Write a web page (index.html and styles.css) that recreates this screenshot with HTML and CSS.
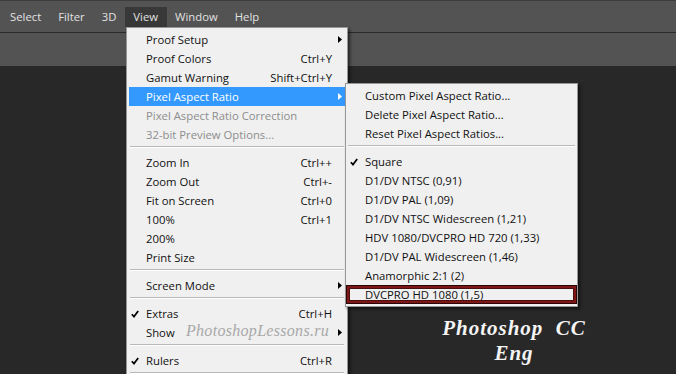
FILE: index.html
```html
<!DOCTYPE html>
<html lang="en">
<head>
    <meta charset="UTF-8">
    <meta name="viewport" content="width=device-width, initial-scale=1.0">
    <title>View - Pixel Aspect Ratio</title>
    <link rel="stylesheet" href="styles.css">
</head>
<body>
    <div class="menubar">
        <span class="menu-title">Select</span>
        <span class="menu-title">Filter</span>
        <span class="menu-title">3D</span>
        <span class="menu-title open">View</span>
        <span class="menu-title">Window</span>
        <span class="menu-title">Help</span>
    </div>
    <div class="options"></div>
    <div class="workspace"></div>

    <!-- View menu -->
    <div class="menu view-menu">
        <div class="row"><span></span><span>Proof Setup</span><span></span><span class="arrow"><svg width="4" height="7" viewBox="0 0 4 7"><path d="M0 0L4 3.5L0 7z"/></svg></span></div>
        <div class="row"><span></span><span>Proof Colors</span><span class="key">Ctrl+Y</span><span></span></div>
        <div class="row"><span></span><span>Gamut Warning</span><span class="key">Shift+Ctrl+Y</span><span></span></div>
        <div class="row active"><span></span><span>Pixel Aspect Ratio</span><span></span><span class="arrow"><svg width="4" height="7" viewBox="0 0 4 7"><path d="M0 0L4 3.5L0 7z"/></svg></span></div>
        <div class="row disabled"><span></span><span>Pixel Aspect Ratio Correction</span><span></span><span></span></div>
        <div class="row disabled"><span></span><span>32-bit Preview Options...</span><span></span><span></span></div>
        <div class="sep"></div>
        <div class="row"><span></span><span>Zoom In</span><span class="key">Ctrl++</span><span></span></div>
        <div class="row"><span></span><span>Zoom Out</span><span class="key">Ctrl+-</span><span></span></div>
        <div class="row"><span></span><span>Fit on Screen</span><span class="key">Ctrl+0</span><span></span></div>
        <div class="row"><span></span><span>100%</span><span class="key">Ctrl+1</span><span></span></div>
        <div class="row"><span></span><span>200%</span><span></span><span></span></div>
        <div class="row"><span></span><span>Print Size</span><span></span><span></span></div>
        <div class="sep"></div>
        <div class="row"><span></span><span>Screen Mode</span><span></span><span class="arrow"><svg width="4" height="7" viewBox="0 0 4 7"><path d="M0 0L4 3.5L0 7z"/></svg></span></div>
        <div class="sep"></div>
        <div class="row"><span class="check"><svg width="8" height="8" viewBox="0 0 8 8"><path d="M0.8 4.2L3 6.6L7.2 1"/></svg></span><span>Extras</span><span class="key">Ctrl+H</span><span></span></div>
        <div class="row"><span></span><span>Show</span><span></span><span class="arrow"><svg width="4" height="7" viewBox="0 0 4 7"><path d="M0 0L4 3.5L0 7z"/></svg></span></div>
        <div class="sep"></div>
        <div class="row"><span class="check"><svg width="8" height="8" viewBox="0 0 8 8"><path d="M0.8 4.2L3 6.6L7.2 1"/></svg></span><span>Rulers</span><span class="key">Ctrl+R</span><span></span></div>
        <div class="sep"></div>
    </div>

    <!-- Pixel Aspect Ratio submenu -->
    <div class="menu submenu">
        <div class="row"><span></span><span>Custom Pixel Aspect Ratio...</span></div>
        <div class="row"><span></span><span>Delete Pixel Aspect Ratio...</span></div>
        <div class="row"><span></span><span>Reset Pixel Aspect Ratios...</span></div>
        <div class="sep"></div>
        <div class="row"><span class="check"><svg width="8" height="8" viewBox="0 0 8 8"><path d="M0.8 4.2L3 6.6L7.2 1"/></svg></span><span>Square</span></div>
        <div class="row"><span></span><span>D1/DV NTSC (0,91)</span></div>
        <div class="row"><span></span><span>D1/DV PAL (1,09)</span></div>
        <div class="row"><span></span><span>D1/DV NTSC Widescreen (1,21)</span></div>
        <div class="row"><span></span><span>HDV 1080/DVCPRO HD 720 (1,33)</span></div>
        <div class="row"><span></span><span>D1/DV PAL Widescreen (1,46)</span></div>
        <div class="row"><span></span><span>Anamorphic 2:1 (2)</span></div>
        <div class="row marked"><span></span><span>DVCPRO HD 1080 (1,5)</span></div>
    </div>

    <div class="watermark site">PhotoshopLessons.ru</div>
    <div class="watermark brand">Photoshop&nbsp; CC<br>Eng</div>
</body>
</html>
```

FILE: styles.css
```css
body {
    margin: 0;
    height: 374px;
    overflow: hidden;
    position: relative;
    background-color: #282828;
    font-family: "Open Sans", "Noto Sans", sans-serif;
    font-size: 11.3px;
}
.menubar {
    display: flex;
    height: 31px;
    padding-left: 1.5px;
    background-color: #535353;
    border-top: 1px solid #3d3d3d;
    border-bottom: 1px solid #2a2a2a;
}
.menu-title {
    margin-top: 6px;
    height: 20px;
    line-height: 20px;
    padding: 0 8.5px;
    color: #e2e2e2;
}
.menu-title.open {
    background-color: #383838;
    height: 20px;
}
.options {
    height: 33px;
    background-color: #535353;
}
.workspace {
    height: 308px;
    background-color: #282828;
}
.menu {
    position: absolute;
    box-sizing: border-box;
    background-color: #f0f0f0;
    border: 1px solid #979797;
    box-shadow: 2px 2px 3px rgba(0, 0, 0, 0.55);
    color: #111;
}
.view-menu {
    left: 126px;
    top: 27px;
    width: 222px;
    padding: 2px 2px;
}
.submenu {
    left: 345px;
    top: 83px;
    width: 233px;
    padding: 2px 0;
}
.row {
    display: grid;
    grid-template-columns: 17px 1fr auto 13px;
    align-items: center;
    height: 19px;
    white-space: nowrap;
}
.submenu .row {
    grid-template-columns: 19px 1fr;
}
.row.active {
    background-color: #3399ff;
    color: #fff;
}
.row.disabled {
    color: #8d8d8d;
}
.row.marked {
    box-shadow: inset 0 0 0 1px #2a0505, inset 0 0 0 3px #7e1616, inset 0 0 0 4px #4a1010;
}
.key {
    text-align: right;
}
.arrow {
    display: flex;
    padding-left: 6px;
}
.arrow path {
    fill: #000;
}
.active .arrow path {
    fill: #fff;
}
.check {
    display: flex;
    margin-left: 2px;
}
.submenu .check {
    margin-left: 4px;
}
.check path {
    fill: none;
    stroke: #000;
    stroke-width: 1.7;
}
.sep {
    height: 0;
    margin: 2px 1px 5px;
    border-top: 1px solid #b9b9b9;
    border-bottom: 1px solid #fff;
}
.submenu .sep {
    margin: 2px 2px 5px;
}
.watermark {
    position: absolute;
    font-family: "Liberation Serif", serif;
    font-style: italic;
}
.site {
    left: 186px;
    top: 322px;
    font-size: 16px;
    color: #a8a8a8;
    letter-spacing: 0.3px;
}
.brand {
    left: 436px;
    top: 316px;
    width: 156px;
    text-align: center;
    font-size: 21px;
    font-weight: bold;
    line-height: 25px;
    letter-spacing: 1px;
    color: #f4f4f4;
}
```
